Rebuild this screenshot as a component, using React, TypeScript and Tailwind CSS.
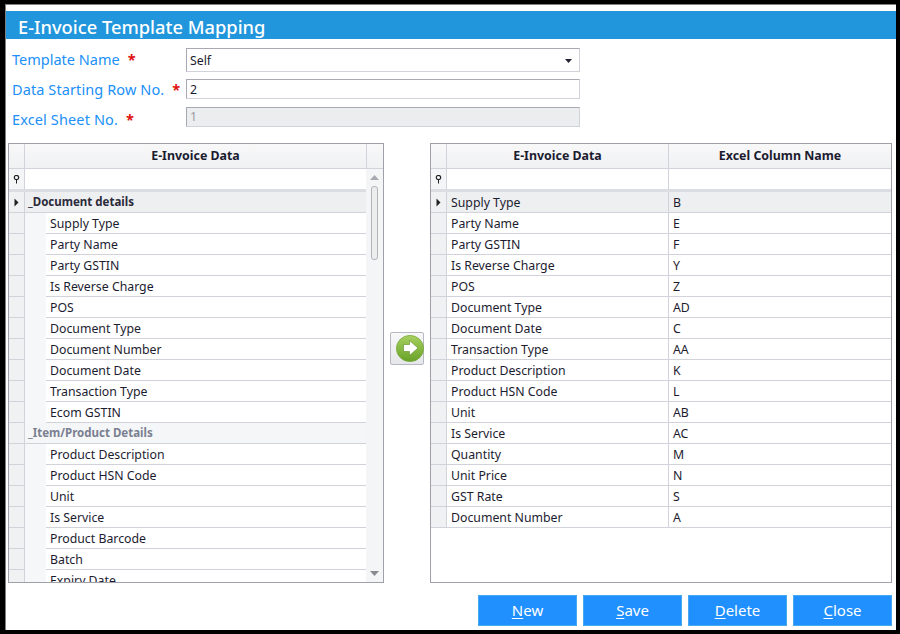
import React from "react";

const leftTop = ["Supply Type", "Party Name", "Party GSTIN", "Is Reverse Charge", "POS", "Document Type", "Document Number", "Document Date", "Transaction Type", "Ecom GSTIN"];
const leftBottom = ["Product Description", "Product HSN Code", "Unit", "Is Service", "Product Barcode", "Batch", "Expiry Date"];

const mapped = [
  ["Supply Type", "B"],
  ["Party Name", "E"],
  ["Party GSTIN", "F"],
  ["Is Reverse Charge", "Y"],
  ["POS", "Z"],
  ["Document Type", "AD"],
  ["Document Date", "C"],
  ["Transaction Type", "AA"],
  ["Product Description", "K"],
  ["Product HSN Code", "L"],
  ["Unit", "AB"],
  ["Is Service", "AC"],
  ["Quantity", "M"],
  ["Unit Price", "N"],
  ["GST Rate", "S"],
  ["Document Number", "A"],
];

const fontStack = "font-['Noto_Sans','Open_Sans',sans-serif]";

const Pin = () => (
  <svg width="7" height="9" viewBox="0 0 7 9" className="block">
    <circle cx="3.5" cy="2.5" r="2.2" fill="none" stroke="#222" strokeWidth="1.2" />
    <path d="M3 4.5h1v4h-1z" fill="#222" />
  </svg>
);

const RowArrow = () => (
  <svg width="5" height="9" viewBox="0 0 5 9" className="block">
    <path d="M0.5 0.5L4.5 4.5L0.5 8.5z" fill="#222" />
  </svg>
);

const Label = ({ text, gap, h }: { text: string; gap: string; h: string }) => (
  <div className={`w-[174px] flex items-center text-[14.5px] text-[#2090f8] ${h}`}>
    <span>{text}</span>
    <span className={`text-[#e01010] font-bold ${gap}`}>*</span>
  </div>
);

const ColumnHeader = ({ text, className }: { text: string; className: string }) => (
  <div className={`h-[24px] flex items-center justify-center font-bold text-[12.4px] text-[#1c1c30] border-r border-[#d2d3da] bg-gradient-to-b from-[#f8f8f9] to-[#f0f1f3] ${className}`}>
    {text}
  </div>
);

const LeftChild = ({ text }: { text: string }) => (
  <div className="h-[21px] flex shrink-0">
    <div className="w-[16px] bg-[#f0f1f3] border-r border-b border-[#d2d3da]" />
    <div className="w-[21px] bg-[#f6f7f9]" />
    <div className="flex-1 pl-[4px] pt-[2px] flex items-center text-[12.3px] text-[#1c1c30] border-b border-[#d2d3da] bg-white">{text}</div>
  </div>
);

const GroupRow = ({ text, active }: { text: string; active?: boolean }) => (
  <div className="h-[21px] flex shrink-0">
    <div className="w-[16px] flex items-center justify-center bg-[#f0f1f3] border-r border-b border-[#d2d3da]">
      {active ? <RowArrow /> : null}
    </div>
    <div className={`flex-1 pl-[3px] flex items-center text-[11.5px] font-bold border-b border-[#d2d3da] ${active ? "bg-[#eeeff1] text-[#2a2a3a]" : "bg-[#f5f6f8] text-[#7a8090]"}`}>
      {text}
    </div>
  </div>
);

const LeftGrid = () => (
  <div className="w-[376px] h-[440px] border border-[#a0a0aa] flex flex-col overflow-hidden bg-white">
    <div className="flex border-b border-[#d2d3da]">
      <ColumnHeader text="" className="w-[16px]" />
      <ColumnHeader text="E-Invoice Data" className="flex-1" />
      <ColumnHeader text="" className="w-[16px] border-r-0" />
    </div>
    <div className="flex flex-1 min-h-0">
      <div className="flex-1 min-w-0 flex flex-col overflow-hidden">
        <div className="h-[20px] shrink-0 flex border-b-[3px] border-[#dcdde2] box-content">
          <div className="w-[16px] flex items-center justify-center border-r border-[#d2d3da] bg-[#f4f5f6]"><Pin /></div>
          <div className="flex-1" />
        </div>
        <GroupRow text="_Document details" active />
        {leftTop.map((t) => <LeftChild key={t} text={t} />)}
        <GroupRow text="_Item/Product Details" />
        {leftBottom.map((t) => <LeftChild key={t} text={t} />)}
      </div>
      <div className="w-[17px] shrink-0 bg-[#f4f5f7] flex flex-col items-center">
        <svg width="9" height="5" viewBox="0 0 9 5" className="mt-[6px]"><path d="M4.5 0L9 5H0z" fill="#a8a9b0" /></svg>
        <div className="w-[7px] h-[74px] mt-[6px] rounded-[3px] bg-[#eceded] border border-[#b4b5bc]" />
        <svg width="9" height="5" viewBox="0 0 9 5" className="mt-auto mb-[6px]"><path d="M0 0H9L4.5 5z" fill="#8a8b92" /></svg>
      </div>
    </div>
  </div>
);

const RightGrid = () => (
  <div className="w-[462px] h-[440px] border border-[#a0a0aa] flex flex-col overflow-hidden bg-white">
    <div className="flex border-b border-[#d2d3da]">
      <ColumnHeader text="" className="w-[16px]" />
      <ColumnHeader text="E-Invoice Data" className="w-[222px]" />
      <ColumnHeader text="Excel Column Name" className="flex-1 border-r-0" />
    </div>
    <div className="h-[20px] shrink-0 flex border-b-[3px] border-[#dcdde2] box-content">
      <div className="w-[16px] flex items-center justify-center border-r border-[#d2d3da] bg-[#f4f5f6]"><Pin /></div>
      <div className="w-[222px] border-r border-[#d2d3da]" />
      <div className="flex-1" />
    </div>
    {mapped.map(([name, col], i) => (
      <div key={name} className={`h-[21px] flex shrink-0 text-[12.3px] text-[#1c1c30] ${i === 0 ? "bg-[#eeeff1]" : ""}`}>
        <div className="w-[16px] flex items-center justify-center bg-[#f0f1f3] border-r border-b border-[#d2d3da]">
          {i === 0 ? <RowArrow /> : null}
        </div>
        <div className="w-[222px] pl-[4px] pt-[2px] flex items-center border-r border-b border-[#d2d3da]">{name}</div>
        <div className="flex-1 pl-[4px] pt-[2px] flex items-center border-b border-[#d2d3da]">{col}</div>
      </div>
    ))}
  </div>
);

const TransferButton = () => (
  <div className="w-[34px] h-[33px] mt-[189px] rounded-[2px] border border-[#b8b9c0] bg-gradient-to-b from-[#f8f8f9] to-[#e6e7ea] flex items-center justify-end">
    <svg width="28" height="27" viewBox="0 0 28 27" className="block mr-[-1px]">
      <defs>
        <linearGradient id="greenBall" x1="0" y1="0" x2="0" y2="1">
          <stop offset="0" stopColor="#a8d060" />
          <stop offset="1" stopColor="#68a228" />
        </linearGradient>
      </defs>
      <ellipse cx="14" cy="13.5" rx="13.6" ry="13.1" fill="url(#greenBall)" stroke="#76a838" strokeWidth="0.8" />
      <path d="M7.5 9.5H13.5V5.5L22 13L13.5 20.5V16.5H7.5z" fill="#ffffff" stroke="#5a8c22" strokeWidth="0.6" />
    </svg>
  </div>
);

const ActionButton = ({ hot, rest }: { hot: string; rest: string }) => (
  <button className="w-[99px] h-[31px] bg-[#2090ff] border border-[#48a8f0] text-white text-[15px] flex items-center justify-center">
    <span><span className="underline underline-offset-2">{hot}</span>{rest}</span>
  </button>
);

export default function App() {
  return (
    <div className={`w-[900px] h-[634px] bg-black pl-[5px] pt-[4px] pr-[4px] pb-[4px] overflow-hidden ${fontStack}`}>
      <div className="h-full bg-white border-l border-t border-[#808080] flex flex-col">
        <div className="pt-[6px]">
          <div className="h-[28px] bg-[#2196dc] text-white text-[18.3px] font-medium pl-[12px] pt-[4px] flex items-center">
            E-Invoice Template Mapping
          </div>
        </div>
        <div className="pl-[6px] pt-[9px] flex flex-col">
          <div className="flex items-center">
            <Label text="Template Name" gap="ml-[8px]" h="h-[24px]" />
            <div className="w-[394px] h-[24px] border border-[#a8a9b4] border-r-[#d2d3da] border-b-[#d2d3da] pl-[3px] pt-[2px] pr-[7px] flex items-center justify-between text-[12.3px] text-[#1c1c30]">
              <span>Self</span>
              <svg width="7" height="4" viewBox="0 0 7 4"><path d="M0 0H7L3.5 4z" fill="#222233" /></svg>
            </div>
          </div>
          <div className="flex items-center mt-[7px]">
            <Label text="Data Starting Row No." gap="ml-[8px] tracking-normal" h="h-[20px] pt-[2px] tracking-[0.1px]" />
            <div className="w-[394px] h-[20px] border border-[#a8a9b4] border-r-[#d2d3da] border-b-[#d2d3da] pl-[3px] pt-[2px] flex items-center text-[12.3px] text-[#1c1c30]">2</div>
          </div>
          <div className="flex items-center mt-[8px]">
            <Label text="Excel Sheet No." gap="ml-[8px] tracking-normal" h="h-[20px] pt-[5px] tracking-[0.13px]" />
            <div className="w-[394px] h-[20px] border border-[#a8a9b4] border-r-[#d2d3da] border-b-[#d2d3da] bg-[#ecedef] pl-[3px] pt-[1px] flex items-center text-[12.3px] text-[#9a9aa4]">1</div>
          </div>
        </div>
        <div className="pl-[2px] pt-[16px] flex">
          <LeftGrid />
          <div className="w-[46px] flex justify-center"><TransferButton /></div>
          <RightGrid />
        </div>
        <div className="pt-[12px] pl-[472px] flex gap-[6px]">
          <ActionButton hot="N" rest="ew" />
          <ActionButton hot="S" rest="ave" />
          <ActionButton hot="D" rest="elete" />
          <ActionButton hot="C" rest="lose" />
        </div>
      </div>
    </div>
  );
}
